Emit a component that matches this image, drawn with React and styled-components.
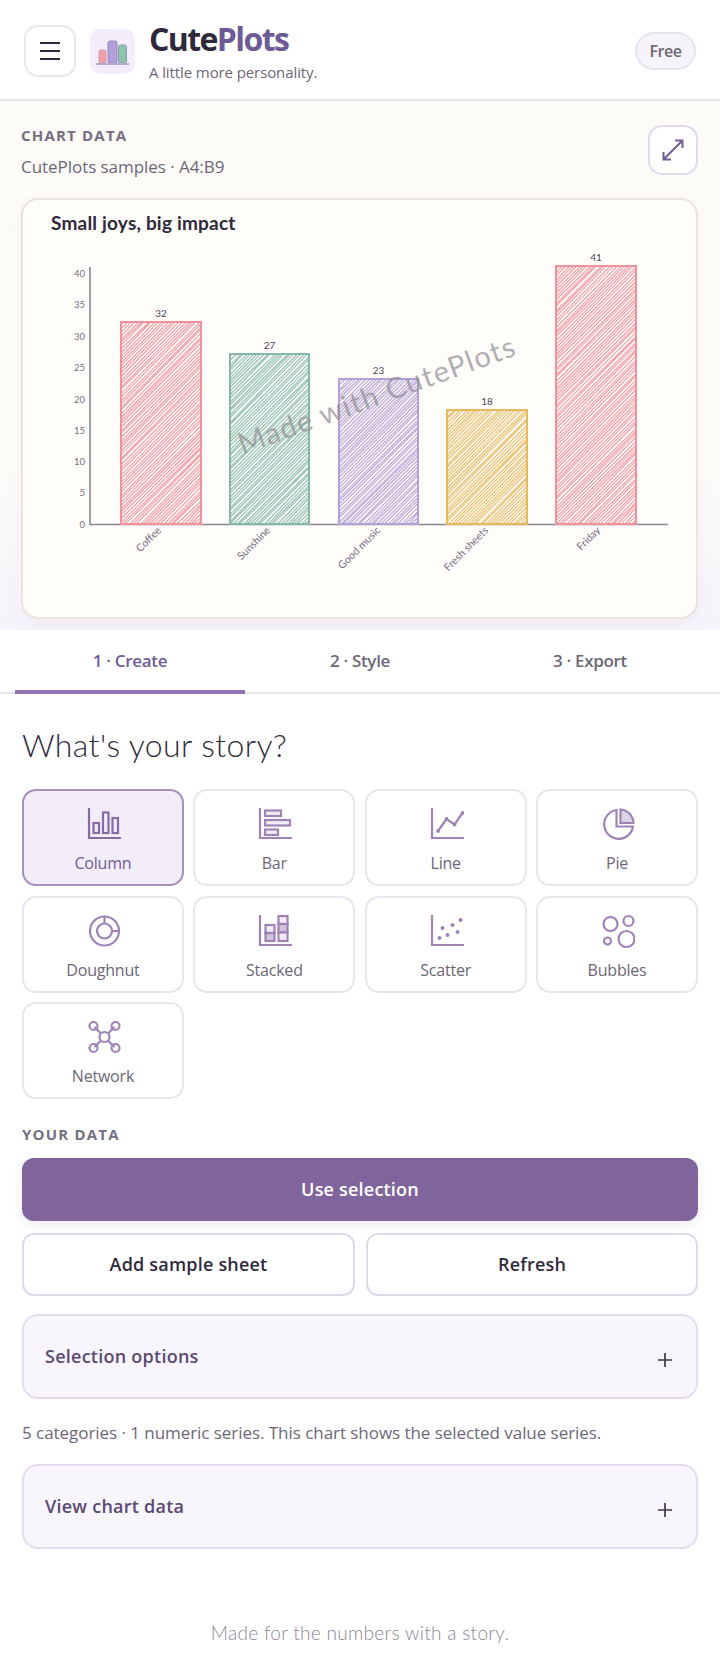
import React from "react";
import styled, { createGlobalStyle } from "styled-components";

const sans = `"Open Sans", "Noto Sans", sans-serif`;
const hand = `"Lato", "Open Sans", sans-serif`;

const Global = createGlobalStyle`
  html, body { margin: 0; padding: 0; background: #fff; }
  body { font-family: ${sans}; color: #2f2a3b; }
  * { box-sizing: border-box; }
  button { font-family: inherit; }
`;

const Page = styled.div`
  width: 720px;
  height: 1677px;
  overflow: hidden;
  background: #fff;
  display: flex;
  flex-direction: column;
`;

const Header = styled.header`
  height: 101px;
  padding: 3px 24px 0;
  display: flex;
  align-items: center;
  border-bottom: 2px solid #e8e6ec;
`;
const MenuButton = styled.button`
  width: 52px;
  height: 52px;
  border: 2px solid #e9e6ef;
  border-radius: 14px;
  background: #fff;
  display: flex;
  align-items: center;
  justify-content: center;
  padding: 0;
`;
const LogoTile = styled.div`
  width: 45px;
  height: 45px;
  margin-left: 14px;
  border-radius: 10px;
  background: #f3edfb;
  display: flex;
  align-items: center;
  justify-content: center;
`;
const Brand = styled.div`
  margin-left: 14px;
  display: flex;
  flex-direction: column;
  flex: 1;
`;
const BrandName = styled.div`
  font-size: 32px;
  line-height: 36px;
  font-weight: 700;
  letter-spacing: -1.6px;
  color: #2f2a3b;
`;
const BrandAccent = styled.span`
  color: #6e5a96;
`;
const Tagline = styled.div`
  font-size: 15px;
  line-height: 20px;
  letter-spacing: -0.1px;
  color: #6d6777;
  margin-top: 5px;
`;
const Pill = styled.div`
  width: 61px;
  height: 38px;
  border: 2px solid #e8e4ef;
  border-radius: 19px;
  background: #f6f3fa;
  color: #6d6777;
  font-size: 16px;
  font-weight: 600;
  letter-spacing: -0.5px;
  display: flex;
  align-items: center;
  justify-content: center;
`;

const ChartArea = styled.section`
  height: 529px;
  padding: 24px 22px 11px 21px;
  background: linear-gradient(180deg, #fdfbf8 0%, #fdfbf8 70%, #f6f3fb 100%);
  display: flex;
  flex-direction: column;
`;
const ChartTop = styled.div`
  height: 73px;
  display: flex;
  justify-content: space-between;
  align-items: flex-start;
`;
const Eyebrow = styled.div`
  font-size: 15px;
  line-height: 20px;
  font-weight: 700;
  letter-spacing: 1.2px;
  color: #756e80;
  text-transform: uppercase;
`;
const SourceLine = styled.div`
  margin-top: 10px;
  font-size: 17px;
  line-height: 24px;
  letter-spacing: -0.05px;
  color: #6d6777;
`;
const ExpandButton = styled.button`
  width: 50px;
  height: 50px;
  border: 2px solid #e3d9ee;
  border-radius: 14px;
  background: #fff;
  display: flex;
  align-items: center;
  justify-content: center;
  padding: 0;
`;
const ChartCard = styled.div`
  width: 677px;
  height: 421px;
  border: 2px solid #ebe3dc;
  border-radius: 17px;
  background: #fffdfa;
  overflow: hidden;
  box-shadow: 0 6px 16px rgba(120, 100, 160, 0.05);
`;

const Tabs = styled.nav`
  height: 64px;
  padding: 0 15px;
  display: grid;
  grid-template-columns: repeat(3, 230px);
  border-bottom: 2px solid #e8e6ec;
  background: #fff;
`;
const Tab = styled.div`
  height: 64px;
  display: flex;
  align-items: center;
  justify-content: center;
  padding-top: 1px;
  font-size: 17px;
  font-weight: 600;
  letter-spacing: -0.3px;
  color: ${(p) => (p.$active ? "#6f5b98" : "#6d6777")};
  border-bottom: 4px solid ${(p) => (p.$active ? "#8f74b4" : "transparent")};
`;

const Main = styled.main`
  padding: 0 22px;
  flex: 1;
  display: flex;
  flex-direction: column;
`;
const Story = styled.h2`
  margin: 28px 0 0;
  height: 67px;
  font-family: ${hand};
  font-size: 32px;
  line-height: 46px;
  font-weight: 300;
  letter-spacing: 0.4px;
  color: #2f2a3b;
`;
const TypeGrid = styled.div`
  display: grid;
  grid-template-columns: repeat(4, 1fr);
  grid-auto-rows: 97px;
  column-gap: 9.5px;
  row-gap: 9.5px;
  width: 676px;
`;
const TypeCard = styled.button`
  border: 2px solid ${(p) => (p.$active ? "#a88fbd" : "#e9e5ef")};
  border-radius: 14px;
  background: ${(p) => (p.$active ? "#f3edf9" : "#fff")};
  color: ${(p) => (p.$active ? "#6f5b98" : "#6d6777")};
  font-size: 16px;
  letter-spacing: -0.2px;
  display: flex;
  flex-direction: column;
  align-items: center;
  gap: 9px;
  padding: 15px 0 0;
`;
const TypeLabel = styled.span`
  line-height: 24px;
`;
const TypeIcon = styled.svg`
  width: 36px;
  height: 36px;
  display: block;
  flex: none;
`;
const DataLabel = styled(Eyebrow)`
  margin-top: 25px;
`;
const Primary = styled.button`
  margin-top: 14px;
  width: 676px;
  height: 63px;
  border: 0;
  border-radius: 12px;
  background: #80659d;
  color: #fff;
  font-size: 18px;
  font-weight: 600;
  letter-spacing: 0.2px;
  padding: 0 0 2px;
  box-shadow: 0 4px 10px rgba(110, 90, 150, 0.12);
`;
const ButtonRow = styled.div`
  margin-top: 12px;
  display: grid;
  grid-template-columns: 333px 332px;
  column-gap: 11px;
`;
const Secondary = styled.button`
  height: 63px;
  border: 2px solid #e0dae8;
  border-radius: 12px;
  background: #fff;
  color: #2f2a3b;
  font-size: 18px;
  font-weight: 600;
  letter-spacing: 0.2px;
  padding: 0 0 2px;
`;
const Accordion = styled.div`
  margin-top: ${(p) => p.$top}px;
  width: 676px;
  height: 85px;
  border: 2px solid #e4dcee;
  border-radius: 16px;
  background: #f8f6fc;
  padding: 0 21px;
  display: flex;
  align-items: center;
  justify-content: space-between;
  color: #5a4a72;
  font-size: 18px;
  font-weight: 600;
  letter-spacing: 0.25px;
`;
const AccordionTitle = styled.span`
  margin-top: -1px;
`;
const PlusIcon = styled.svg`
  width: 16px;
  height: 16px;
  margin-top: 6px;
  margin-right: 2px;
`;
const Note = styled.p`
  margin: 22px 0 0;
  height: 24px;
  font-size: 17px;
  line-height: 24px;
  letter-spacing: -0.05px;
  color: #6d6777;
  white-space: nowrap;
`;
const Footer = styled.footer`
  margin-top: 68px;
  text-align: center;
  font-family: ${hand};
  font-size: 19px;
  line-height: 32px;
  letter-spacing: 0.3px;
  font-weight: 300;
  color: #8d8698;
`;

function rng(seed) {
  let s = seed;
  return () => {
    s = (s * 16807) % 2147483647;
    return (s - 1) / 2147483646;
  };
}

const bars = [
  { name: "Coffee", value: 32, x: 98, w: 80, top: 122, color: "#f0929c", end: 139 },
  { name: "Sunshine", value: 27, x: 207, w: 79, top: 154, color: "#86b8a8", end: 248 },
  { name: "Good music", value: 23, x: 316, w: 79, top: 179, color: "#b49fd6", end: 358 },
  { name: "Fresh sheets", value: 18, x: 424, w: 80, top: 210, color: "#e6b95e", end: 466 },
  { name: "Friday", value: 41, x: 533, w: 80, top: 66, color: "#f0929c", end: 578 },
];
const ticks = [
  [40, 74], [35, 105], [30, 137], [25, 168], [20, 200], [15, 231], [10, 262], [5, 293], [0, 325],
];
const BASE = 324;

function hatchRising(bar, seed, step) {
  const r = rng(seed);
  const { x, w, top } = bar;
  const h = BASE - top;
  const out = [];
  const j = () => (r() - 0.5) * 1.4;
  // lines going up to the right: (x + t) meets top edge, (y = top + t) meets left edge
  for (let c = step; c < w + h; c += step) {
    const a = c < h ? [x, top + c] : [x + (c - h), BASE];
    const b = c < w ? [x + c, top] : [x + w, top + (c - w)];
    out.push(
      `M${(a[0] + j()).toFixed(1)} ${(a[1] + j()).toFixed(1)}L${(b[0] + j()).toFixed(1)} ${(b[1] + j()).toFixed(1)}`
    );
  }
  return out.join("");
}

function Bar({ bar, seed }) {
  const { x, w, top, color, value, name, end } = bar;
  const mid = x + w / 2;
  return (
    <g>
      <path d={hatchRising(bar, seed, 3.4)} stroke={color} strokeWidth="1.2" fill="none" opacity="0.85" />
      <path d={hatchRising(bar, seed + 17, 6.8)} stroke={color} strokeWidth="0.8" fill="none" opacity="0.45" />
      <rect x={x} y={top} width={w} height={BASE - top} fill="none" stroke={color} strokeWidth="2" />
      <text x={mid} y={top - 5} textAnchor="middle" fontSize="10" fill="#4b4658" fontFamily={hand}>
        {value}
      </text>
      <text
        x={end}
        y={331}
        textAnchor="end"
        fontSize="10.5"
        fill="#746e80"
        fontFamily={hand}
        transform={`rotate(-45 ${end} 331)`}
      >
        {name}
      </text>
    </g>
  );
}

function ChartSvg() {
  return (
    <svg width="673" height="417" viewBox="0 0 673 417" style={{ display: "block" }}>
      <text x="28" y="30" fontSize="19" fontFamily={hand} fill="#2f2a3b" fontWeight="700" letterSpacing="0.2">
        Small joys, big impact
      </text>
      <line x1="67" y1="67" x2="67" y2="325" stroke="#77737c" strokeWidth="1.4" />
      <line x1="67" y1="324.5" x2="645" y2="324.5" stroke="#8a8790" strokeWidth="1.4" />
      {ticks.map(([v, y]) => (
        <text key={v} x="62" y={y + 3} textAnchor="end" fontSize="9.5" fill="#746e80" fontFamily={hand}>
          {v}
        </text>
      ))}
      {bars.map((b, i) => (
        <Bar key={b.name} bar={b} seed={101 + i * 37} />
      ))}
      <text
        x="355"
        y="205"
        textAnchor="middle"
        fontSize="29"
        fill="#8f8e96"
        opacity="0.7"
        fontFamily={hand}
        letterSpacing="1.4"
        transform="rotate(-20 355 198)"
      >
        Made with CutePlots
      </text>
    </svg>
  );
}

const stroke = "#a083b5";
const sw = 2.2;
const icons = {
  column: (c) => (
    <>
      <path d="M2.5 2v30h32" fill="none" stroke={c} strokeWidth={sw} />
      <rect x="7" y="17" width="5.5" height="10" fill="none" stroke={c} strokeWidth={sw} />
      <rect x="16.5" y="6.5" width="5.5" height="20.5" fill="none" stroke={c} strokeWidth={sw} />
      <rect x="26" y="12" width="5.5" height="15" fill="none" stroke={c} strokeWidth={sw} />
    </>
  ),
  bar: (c) => (
    <>
      <path d="M2.5 2v30h32" fill="none" stroke={c} strokeWidth={sw} />
      <rect x="7.5" y="4.5" width="16" height="5.5" fill="#f1ecf6" stroke={c} strokeWidth={sw} />
      <rect x="7.5" y="14" width="25" height="5.5" fill="#f1ecf6" stroke={c} strokeWidth={sw} />
      <rect x="7.5" y="23.5" width="13" height="5.5" fill="#f1ecf6" stroke={c} strokeWidth={sw} />
    </>
  ),
  line: (c) => (
    <>
      <path d="M2.5 2v30h32" fill="none" stroke={c} strokeWidth={sw} />
      <path d="M8.5 25L17 13l8 5.5L33 7" fill="none" stroke={c} strokeWidth={sw} />
      <circle cx="8.5" cy="25" r="1.9" fill={c} />
      <circle cx="17" cy="13" r="1.9" fill={c} />
      <circle cx="25" cy="18.5" r="1.9" fill={c} />
      <circle cx="33" cy="7" r="1.9" fill={c} />
    </>
  ),
  pie: (c) => (
    <>
      <path d="M16 4a14.5 14.5 0 1 0 16.5 16.5H16z" fill="none" stroke={c} strokeWidth={sw} />
      <path d="M20 3.5a14 14 0 0 1 13 13.5H20z" fill="#ddd5e6" stroke={c} strokeWidth={sw} />
    </>
  ),
  doughnut: (c) => (
    <>
      <circle cx="18" cy="18" r="14.5" fill="none" stroke={c} strokeWidth={sw} />
      <circle cx="18" cy="18" r="7.5" fill="none" stroke={c} strokeWidth={sw} />
      <path d="M18 3.5v7M25.5 18h7" stroke={c} strokeWidth={sw} />
    </>
  ),
  stacked: (c) => (
    <>
      <path d="M2.5 2v30h32" fill="none" stroke={c} strokeWidth={sw} />
      <rect x="8" y="12" width="9" height="8" fill="#f1ecf6" stroke={c} strokeWidth={sw} />
      <rect x="8" y="20" width="9" height="8" fill="#cfc2dc" stroke={c} strokeWidth={sw} />
      <rect x="21" y="3" width="9" height="8" fill="#f1ecf6" stroke={c} strokeWidth={sw} />
      <rect x="21" y="11" width="9" height="8.5" fill="#cfc2dc" stroke={c} strokeWidth={sw} />
      <rect x="21" y="19.5" width="9" height="8.5" fill="#f1ecf6" stroke={c} strokeWidth={sw} />
    </>
  ),
  scatter: (c) => (
    <>
      <path d="M2.5 2v30h32" fill="none" stroke={c} strokeWidth={sw} />
      {[[10, 25], [13, 15], [18, 22], [23, 12], [28, 19], [31, 7]].map(([x, y]) => (
        <circle key={x} cx={x} cy={y} r="2" fill={c} />
      ))}
    </>
  ),
  bubbles: (c) => (
    <>
      <circle cx="10" cy="11" r="7" fill="none" stroke={c} strokeWidth={sw} />
      <circle cx="28" cy="8" r="5" fill="none" stroke={c} strokeWidth={sw} />
      <circle cx="7" cy="28" r="3.5" fill="none" stroke={c} strokeWidth={sw} />
      <circle cx="26" cy="26" r="8" fill="none" stroke={c} strokeWidth={sw} />
    </>
  ),
  network: (c) => (
    <>
      <path d="M8 8l7 7M28 8l-7 7M8 28l7-7M28 28l-7-7" stroke={c} strokeWidth={sw} />
      <circle cx="18" cy="18" r="5" fill="none" stroke={c} strokeWidth={sw} />
      <circle cx="7" cy="7" r="4" fill="none" stroke={c} strokeWidth={sw} />
      <circle cx="29" cy="7" r="4" fill="none" stroke={c} strokeWidth={sw} />
      <circle cx="7" cy="29" r="4" fill="none" stroke={c} strokeWidth={sw} />
      <circle cx="29" cy="29" r="4" fill="none" stroke={c} strokeWidth={sw} />
    </>
  ),
};

const types = [
  ["Column", "column"], ["Bar", "bar"], ["Line", "line"], ["Pie", "pie"],
  ["Doughnut", "doughnut"], ["Stacked", "stacked"], ["Scatter", "scatter"], ["Bubbles", "bubbles"],
  ["Network", "network"],
];

export default function App() {
  return (
    <Page>
      <Global />
      <Header>
        <MenuButton aria-label="Menu">
          <svg width="20" height="18" viewBox="0 0 20 18">
            <path d="M0 1h20M0 9h20M0 17h20" stroke="#2f2a3b" strokeWidth="2" />
          </svg>
        </MenuButton>
        <LogoTile>
          <svg width="33" height="33" viewBox="0 0 33 33">
            <rect x="3" y="15" width="7" height="13" rx="1.5" fill="#f2a0a4" stroke="#c3a0b8" />
            <rect x="12" y="6" width="9" height="22" rx="2" fill="#b29ed8" stroke="#9b84be" />
            <rect x="22.5" y="10" width="8" height="18" rx="2" fill="#8fc3ae" stroke="#8a98aa" />
            <path d="M0 29h33" stroke="#bba9d0" strokeWidth="2" />
          </svg>
        </LogoTile>
        <Brand>
          <BrandName>
            Cute<BrandAccent>Plots</BrandAccent>
          </BrandName>
          <Tagline>A little more personality.</Tagline>
        </Brand>
        <Pill>Free</Pill>
      </Header>
      <ChartArea>
        <ChartTop>
          <div>
            <Eyebrow>Chart data</Eyebrow>
            <SourceLine>CutePlots samples · A4:B9</SourceLine>
          </div>
          <ExpandButton aria-label="Expand">
            <svg width="22" height="22" viewBox="0 0 22 22">
              <path d="M13 1.5h7.5V9M20.5 1.5L1.5 20.5M1.5 13v7.5H9" fill="none" stroke="#735f95" strokeWidth="2" />
            </svg>
          </ExpandButton>
        </ChartTop>
        <ChartCard>
          <ChartSvg />
        </ChartCard>
      </ChartArea>
      <Tabs>
        <Tab $active>1 · Create</Tab>
        <Tab>2 · Style</Tab>
        <Tab>3 · Export</Tab>
      </Tabs>
      <Main>
        <Story>What's your story?</Story>
        <TypeGrid>
          {types.map(([label, key], i) => (
            <TypeCard key={key} $active={i === 0}>
              <TypeIcon viewBox="-1.5 0 36 36">{icons[key](i === 0 ? "#866ba5" : stroke)}</TypeIcon>
              <TypeLabel>{label}</TypeLabel>
            </TypeCard>
          ))}
        </TypeGrid>
        <DataLabel>Your data</DataLabel>
        <Primary>Use selection</Primary>
        <ButtonRow>
          <Secondary>Add sample sheet</Secondary>
          <Secondary>Refresh</Secondary>
        </ButtonRow>
        <Accordion $top={18}>
          <AccordionTitle>Selection options</AccordionTitle>
          <PlusIcon viewBox="0 0 16 16">
            <path d="M8 1v14M1 8h14" stroke="#3f3650" strokeWidth="1.7" />
          </PlusIcon>
        </Accordion>
        <Note>5 categories · 1 numeric series. This chart shows the selected value series.</Note>
        <Accordion $top={19}>
          <AccordionTitle>View chart data</AccordionTitle>
          <PlusIcon viewBox="0 0 16 16">
            <path d="M8 1v14M1 8h14" stroke="#3f3650" strokeWidth="1.7" />
          </PlusIcon>
        </Accordion>
        <Footer>Made for the numbers with a story.</Footer>
      </Main>
    </Page>
  );
}
